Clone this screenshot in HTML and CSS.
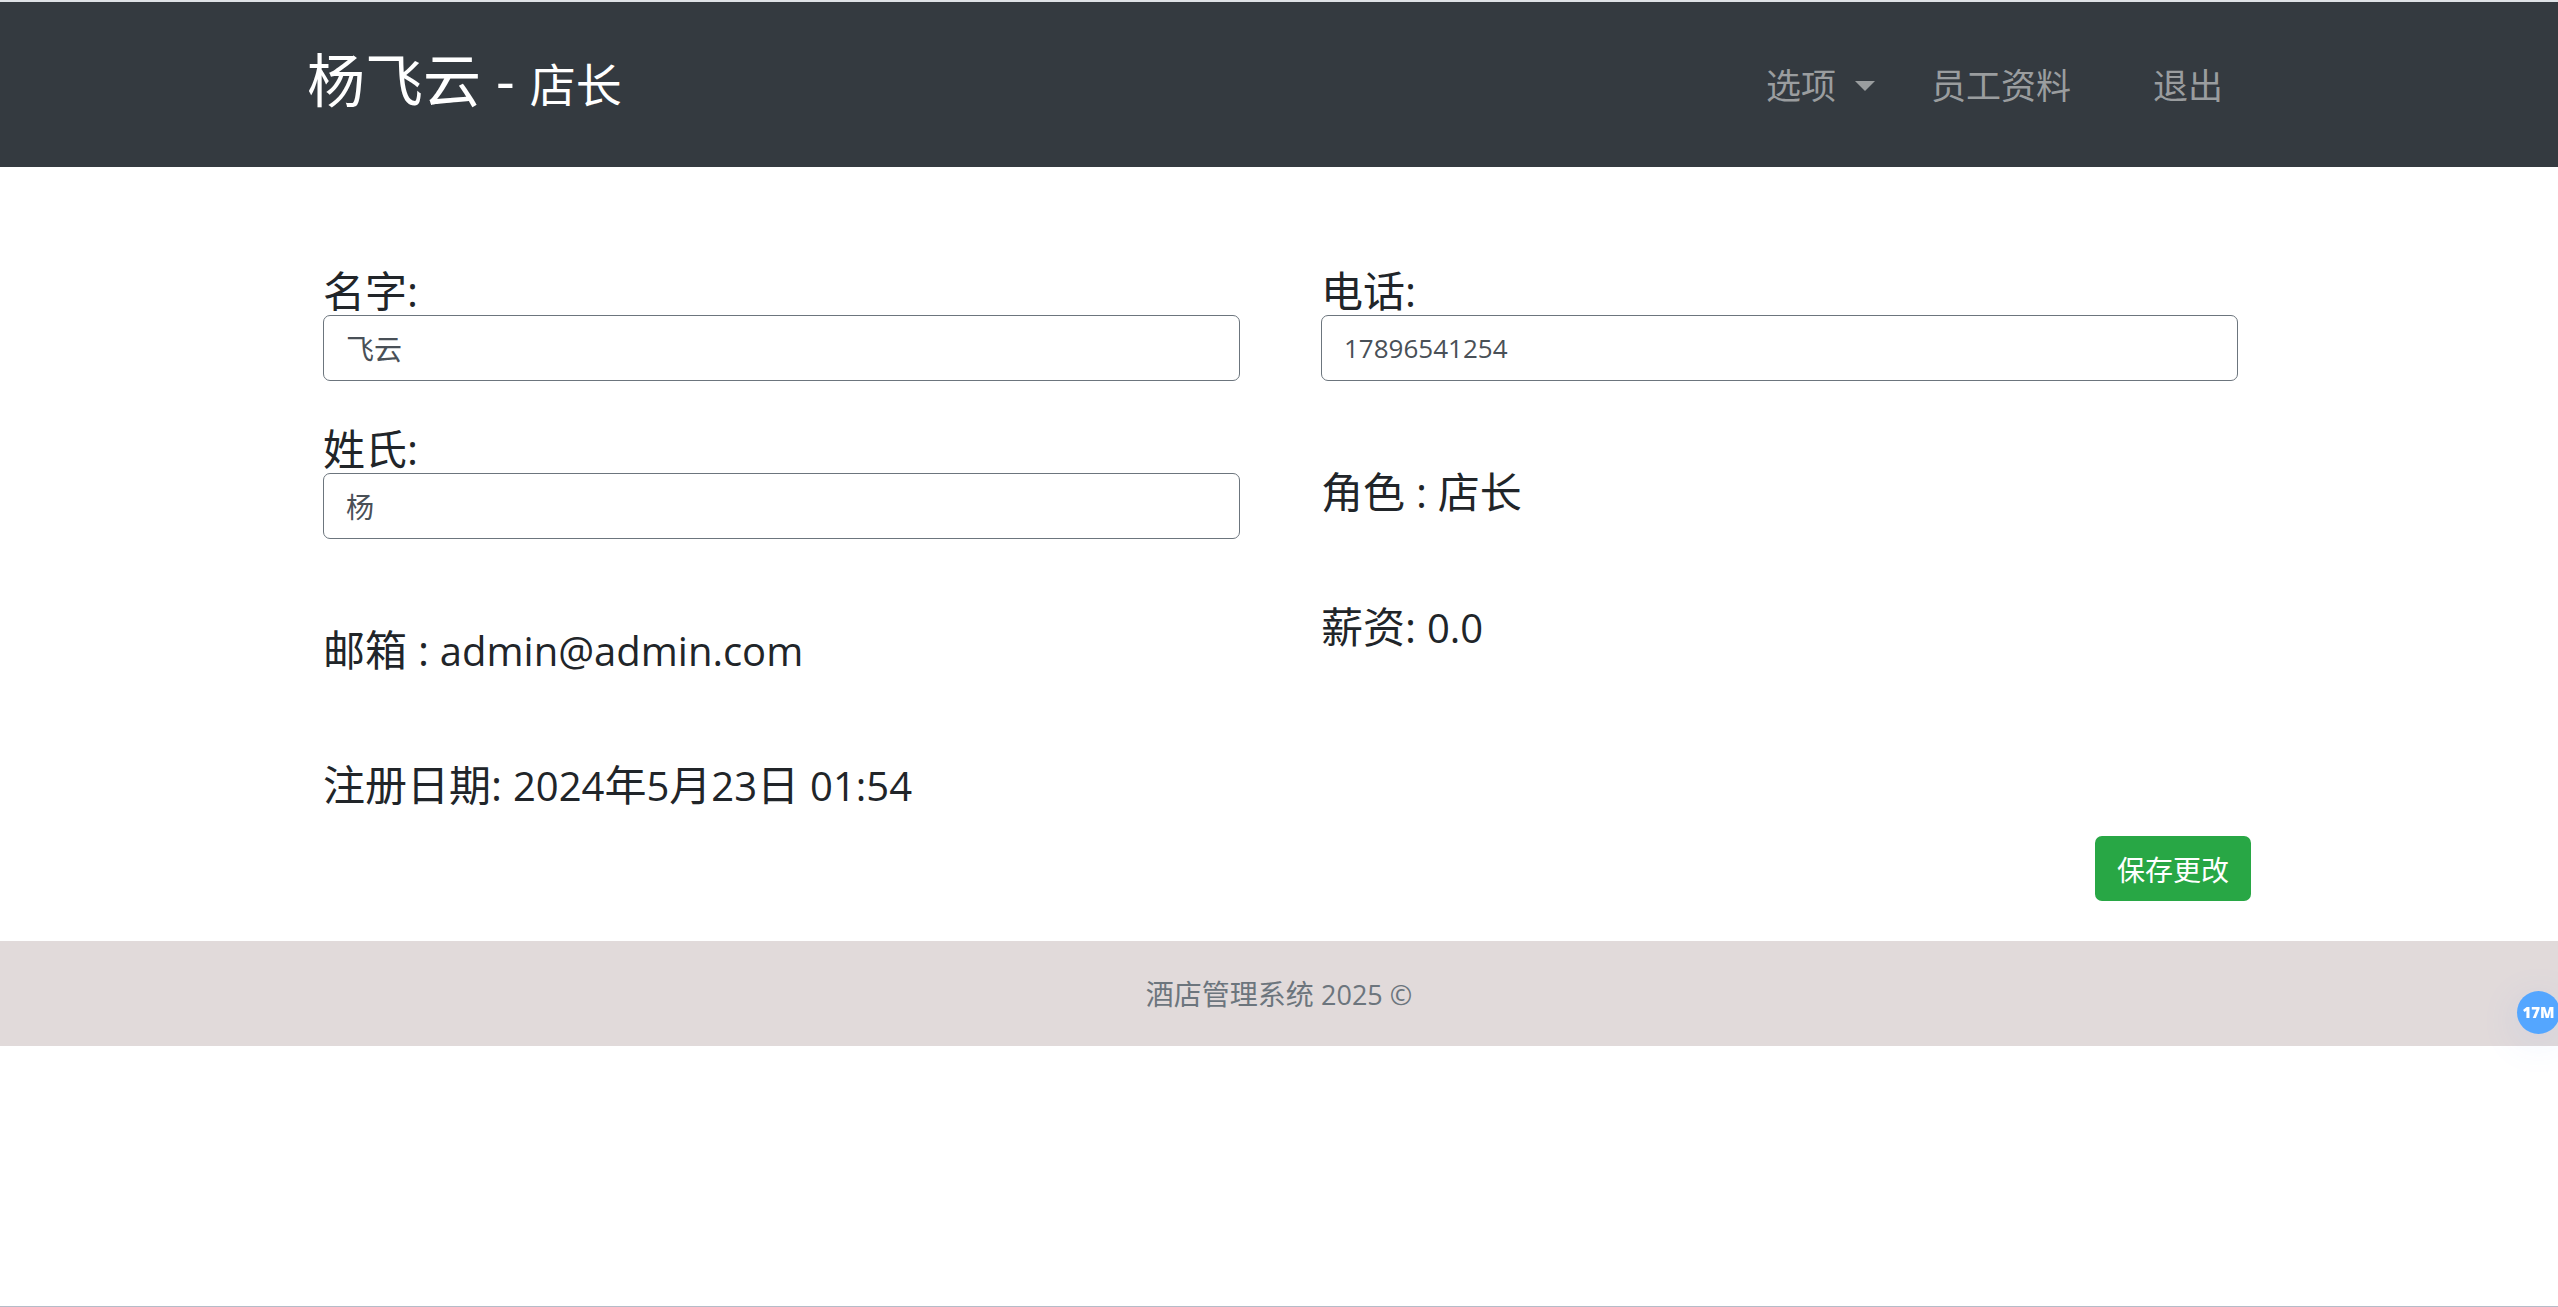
FILE: index.html
```html
<!DOCTYPE html>
<html lang="zh-CN">
<head>
<meta charset="utf-8">
<title>酒店管理系统</title>
<link rel="stylesheet" href="styles.css">
</head>
<body>
<header class="navbar">
  <div class="container navbar-inner">
    <h1 class="brand">杨飞云 - <small>店长</small></h1>
    <nav class="nav">
      <button type="button" class="nav-link toggle">选项<span class="caret"></span></button>
      <a class="nav-link" href="#">员工资料</a>
      <a class="nav-link logout" href="#">退出</a>
    </nav>
  </div>
</header>
<main class="container">
  <form>
    <div class="columns">
      <section class="column">
        <div class="field">
          <label for="first-name">名字:</label>
          <input class="control" id="first-name" type="text" value="飞云">
        </div>
        <div class="field">
          <label for="last-name">姓氏:</label>
          <input class="control" id="last-name" type="text" value="杨">
        </div>
        <div class="facts">
          <p>邮箱 : <span class="latin">admin@admin.com</span></p>
          <p>注册日期: <span class="latin">2024</span>年<span class="latin">5</span>月<span class="latin">23</span>日 <span class="latin">01:54</span></p>
        </div>
      </section>
      <section class="column">
        <div class="field">
          <label for="phone">电话:</label>
          <input class="control control-number" id="phone" type="tel" value="17896541254">
        </div>
        <div class="facts">
          <p>角色 : 店长</p>
          <p>薪资: <span class="latin">0.0</span></p>
        </div>
      </section>
    </div>
    <div class="actions"><button type="submit" class="save">保存更改</button></div>
  </form>
</main>
<footer class="footer">酒店管理系统 <span class="latin-small">2025 ©</span></footer>
<div class="badge">17M</div>
</body>
</html>
```
FILE: styles.css
```css
* { box-sizing: border-box; }

body {
  margin: 0;
  min-height: 100vh;
  border-top: 2px solid #dee2e6;
  border-bottom: 1px solid #b4bcc8;
  background: #fff;
  color: #212529;
  font-family: "Open Sans", "Noto Sans CJK SC", sans-serif;
  font-size: 28px;
}

h1, p { margin: 0; font-weight: 400; }

input, button { font-family: inherit; font-size: 28px; }

.container {
  max-width: 1996px;
  margin: 0 auto;
  padding: 0 26px;
}

.navbar { background: #343a40; }

.navbar-inner {
  display: flex;
  align-items: center;
  justify-content: space-between;
  padding-top: 38px;
  padding-bottom: 47px;
}

.brand {
  color: #fff;
  font-size: 58px;
  line-height: 80px;
}

.brand small {
  font-size: 46px;
  line-height: 46px;
}

.nav {
  display: flex;
  align-items: center;
  padding-top: 12px;
}

.nav-link {
  display: flex;
  align-items: center;
  padding: 0 28px;
  border: 0;
  background: none;
  color: #9a9d9f;
  font-size: 35px;
  line-height: 52px;
  text-decoration: none;
}

.logout { margin-left: 26px; }

.caret {
  margin-left: 19px;
  border-top: 10px solid;
  border-left: 10px solid transparent;
  border-right: 10px solid transparent;
}

.columns {
  display: grid;
  grid-template-columns: 1fr 1fr;
  gap: 81px;
  padding: 106px 13px 0 16px;
}

.field + .field { margin-top: 50px; }

label {
  display: block;
  padding-bottom: 6px;
  font-size: 42px;
  line-height: 36px;
}

.control {
  display: block;
  width: 100%;
  height: 66px;
  padding: 0 22px;
  border: 1px solid #6c757d;
  border-radius: 7px;
  background: #fff;
  color: #495057;
}

.control-number { font-size: 26px; }

.facts {
  display: grid;
  gap: 89px;
  margin-top: 88px;
  font-size: 42px;
  line-height: 46px;
}

/* Latin letters and digits run slightly smaller beside Chinese text */
.latin { font-size: 40px; line-height: 40px; }
.latin-small { font-size: 27px; line-height: 27px; }

.actions {
  display: flex;
  justify-content: flex-end;
  padding: 28px 0 40px;
}

.save {
  height: 65px;
  padding: 0 22px;
  border: 0;
  border-radius: 7px;
  background: #28a745;
  color: #fff;
}

.footer {
  padding: 32px 0 31px;
  background: #e1dada;
  color: #6c757d;
  line-height: 42px;
  text-align: center;
}

.badge {
  position: fixed;
  top: 991px;
  right: -2px;
  width: 43px;
  height: 43px;
  border-radius: 50%;
  background: #54a6ff;
  box-shadow: 0 8px 40px rgba(84, 130, 255, 0.12);
  color: #fff;
  font-size: 15px;
  font-weight: 800;
  line-height: 42px;
  text-align: center;
}
```
